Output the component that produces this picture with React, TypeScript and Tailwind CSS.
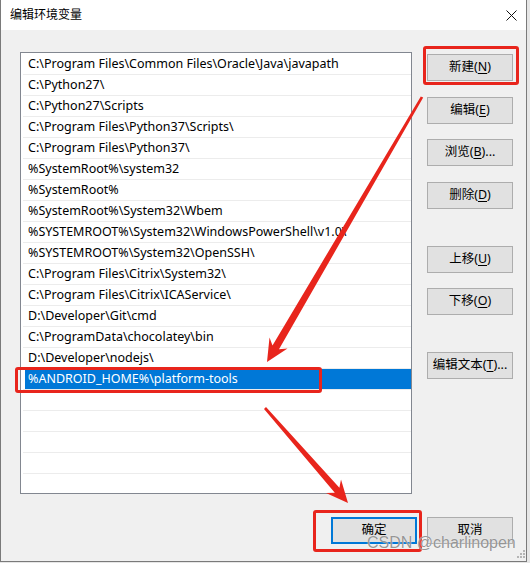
import React from 'react';

const paths = [
  'C:\\Program Files\\Common Files\\Oracle\\Java\\javapath',
  'C:\\Python27\\',
  'C:\\Python27\\Scripts',
  'C:\\Program Files\\Python37\\Scripts\\',
  'C:\\Program Files\\Python37\\',
  '%SystemRoot%\\system32',
  '%SystemRoot%',
  '%SystemRoot%\\System32\\Wbem',
  '%SYSTEMROOT%\\System32\\WindowsPowerShell\\v1.0\\',
  '%SYSTEMROOT%\\System32\\OpenSSH\\',
  'C:\\Program Files\\Citrix\\System32\\',
  'C:\\Program Files\\Citrix\\ICAService\\',
  'D:\\Developer\\Git\\cmd',
  'C:\\ProgramData\\chocolatey\\bin',
  'D:\\Developer\\nodejs\\',
  '%ANDROID_HOME%\\platform-tools',
];

const selectedIndex = 15;

interface WinButtonProps {
  label: string;
  hotkey?: string;
  suffix?: string;
  primary?: boolean;
  className?: string;
}

function WinButton({ label, hotkey, suffix = '', primary = false, className = '' }: WinButtonProps) {
  return (
    <button
      className={
        'w-[86px] h-[27px] bg-[#e1e1e1] text-[12.5px] text-black flex items-center justify-center leading-none ' +
        (primary ? 'border-2 border-[#0078d7] ' : 'border border-[#adadad] ') +
        className
      }
    >
      {label}
      {hotkey && (
        <>
          (<span className="underline underline-offset-2">{hotkey}</span>){suffix}
        </>
      )}
    </button>
  );
}

function RedBox({ className }: { className: string }) {
  return <div className={'absolute border-[3px] border-[#e8251c] rounded-[3px] ' + className} />;
}

export default function App() {
  return (
    <div className="relative w-[530px] h-[563px] overflow-hidden bg-[#e6e6e6] font-['Noto_Sans','Noto_Sans_CJK_SC',sans-serif]">
      <div className="w-[527px] h-[562px] flex flex-col bg-[#f0f0f0] border-l border-r border-b border-[#7a7a7a]">
        {/* title bar */}
        <div className="h-[30px] bg-white flex items-center justify-between pl-[9px] pr-[9px]">
          <span className="text-[12px] text-black">编辑环境变量</span>
          <svg width="11" height="11" viewBox="0 0 11 11" className="mt-px">
            <path d="M0.5 0.5 L10.5 10.5 M10.5 0.5 L0.5 10.5" stroke="#111" strokeWidth="1" />
          </svg>
        </div>

        <div className="flex-1 flex flex-col pl-[19px] pt-[22px]">
          <div className="flex gap-[15px]">
            {/* path list */}
            <div className="w-[392px] h-[442px] bg-white border border-[#828790] pt-px overflow-hidden">
              {paths.map((p, i) =>
                i === selectedIndex ? (
                  <div key={p} className="h-[21px] ml-[2px] border-b border-[#ececec]">
                    <div className="h-[20px] ml-[2px] pl-[3px] bg-[#0078d7] text-white text-[12.5px] leading-[20px] whitespace-nowrap">
                      {p}
                    </div>
                  </div>
                ) : (
                  <div
                    key={p}
                    className="h-[21px] ml-[2px] pl-[5px] border-b border-[#ececec] text-[12.5px] leading-[20px] text-black whitespace-nowrap"
                  >
                    {p}
                  </div>
                )
              )}
              {[0, 1, 2, 3, 4, 5].map((n) => (
                <div key={n} className="h-[21px] ml-[2px] border-b border-[#ececec]" />
              ))}
            </div>

            {/* side buttons */}
            <div className="w-[86px] flex flex-col">
              <WinButton label="新建" hotkey="N" className="mt-[2px]" />
              <WinButton label="编辑" hotkey="E" className="mt-[16px]" />
              <WinButton label="浏览" hotkey="B" suffix="..." className="mt-[15px]" />
              <WinButton label="删除" hotkey="D" className="mt-[16px]" />
              <WinButton label="上移" hotkey="U" className="mt-[37px]" />
              <WinButton label="下移" hotkey="O" className="mt-[15px]" />
              <WinButton label="编辑文本" hotkey="T" suffix="..." className="mt-[37px]" />
            </div>
          </div>

          <div className="w-[493px] flex justify-end gap-[10px] mt-[23px]">
            <WinButton label="确定" primary />
            <WinButton label="取消" />
          </div>
        </div>
      </div>

      {/* resize grip */}
      <svg width="10" height="10" viewBox="0 0 10 10" className="absolute left-[516px] top-[549px]">
        <rect x="7" y="1" width="2" height="2" fill="#b5b5b5" />
        <rect x="4" y="4" width="2" height="2" fill="#b5b5b5" />
        <rect x="7" y="4" width="2" height="2" fill="#b5b5b5" />
        <rect x="1" y="7" width="2" height="2" fill="#b5b5b5" />
        <rect x="4" y="7" width="2" height="2" fill="#b5b5b5" />
        <rect x="7" y="7" width="2" height="2" fill="#b5b5b5" />
      </svg>

      {/* annotations */}
      <RedBox className="left-[423px] top-[46px] w-[96px] h-[39px]" />
      <RedBox className="left-[15px] top-[367px] w-[307px] h-[26px]" />
      <RedBox className="left-[313px] top-[510px] w-[109px] h-[42px]" />

      <svg width="530" height="563" viewBox="0 0 530 563" className="absolute left-0 top-0 pointer-events-none">
        <polygon
          fill="#e8251c"
          points="423.2,97.6 279,349.3 287.5,348.4 267,362 269.5,337.5 272.5,345.5 420.8,96.4"
        />
        <polygon
          fill="#e8251c"
          points="264,408.9 334.8,492.8 326,493 348,503 341,479.5 339.4,487.8 266,407.1"
        />
      </svg>

      <div className="absolute left-[367px] top-[533px] text-[16px] leading-[20px] font-['Liberation_Sans',sans-serif] text-[#7a7a7acc] [text-shadow:0_0_1px_#ffffff]">
        CSDN @charlinopen
      </div>
    </div>
  );
}
